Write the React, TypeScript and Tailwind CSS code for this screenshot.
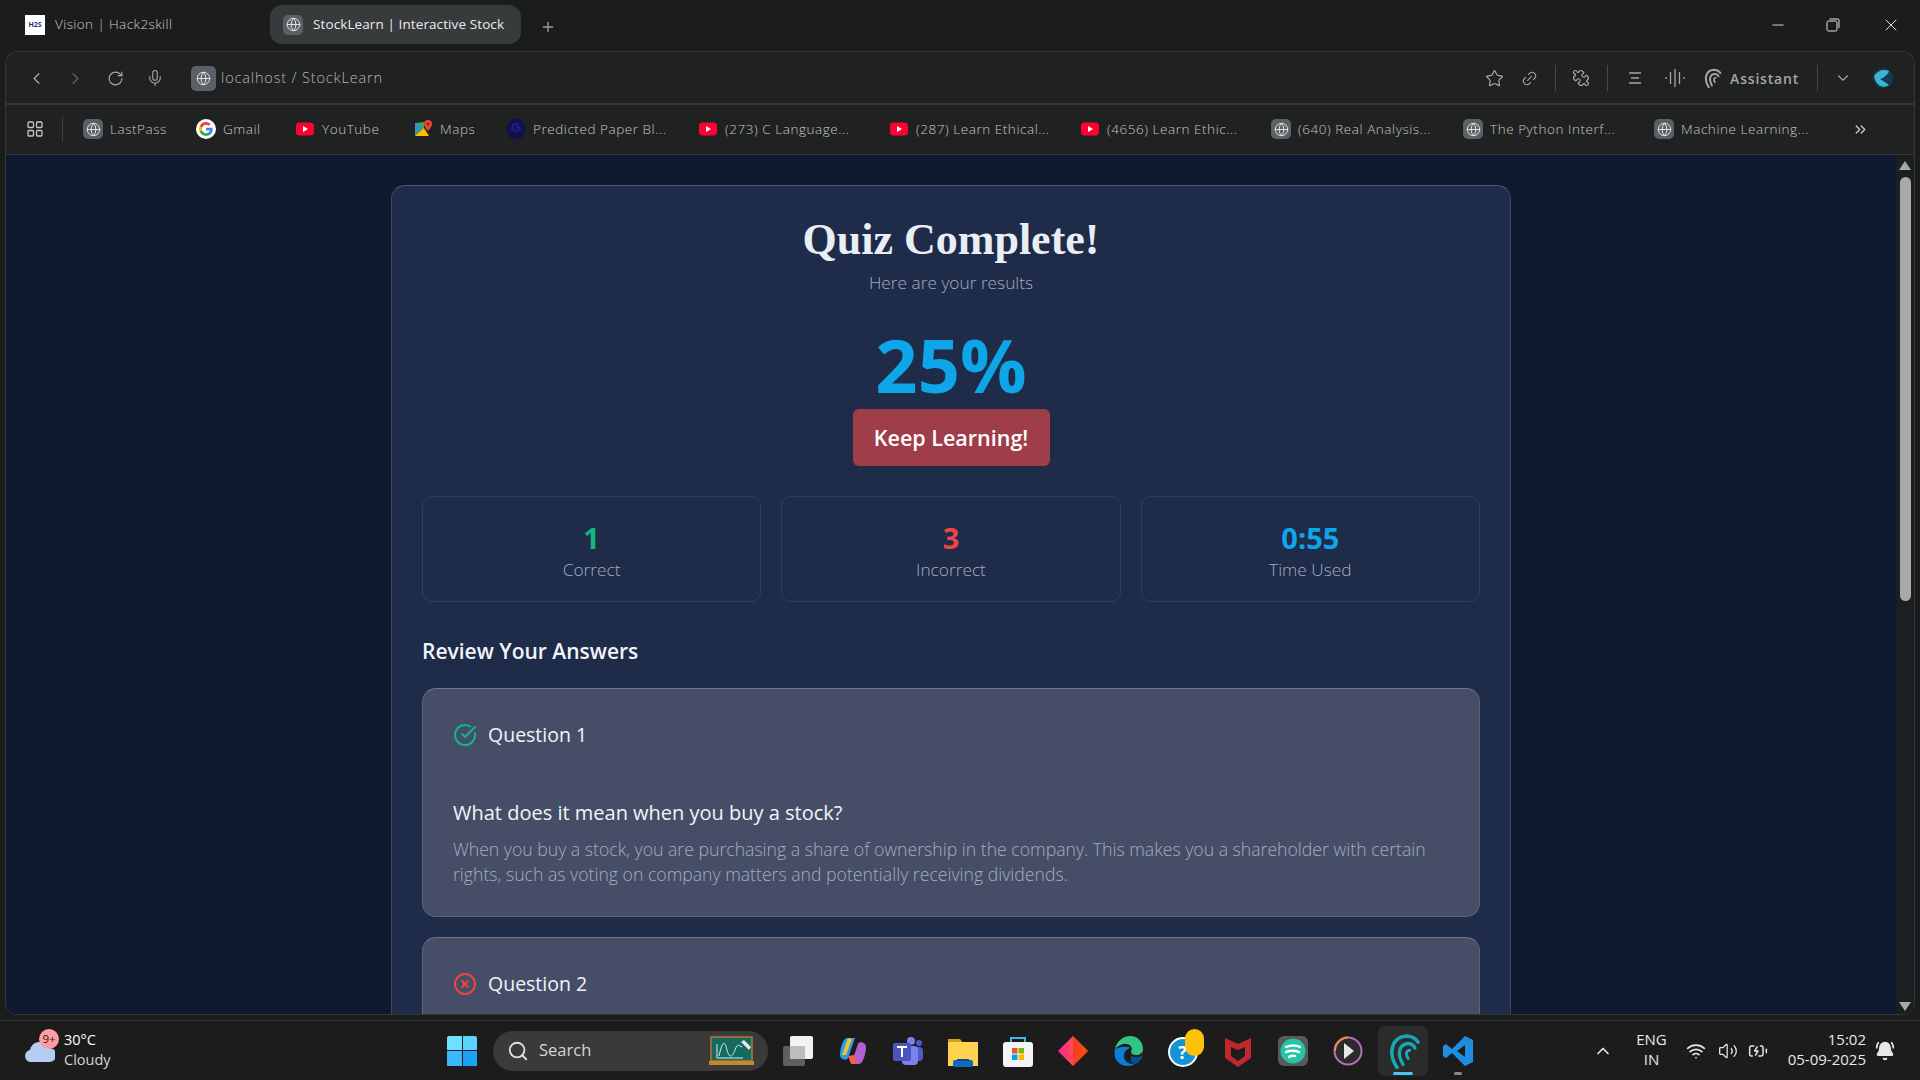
import React from "react";
import { ChevronLeft, ChevronRight, RotateCw, Mic, Globe, Star, Link2, Puzzle, ChevronDown, ChevronsRight, Search, ChevronUp, Wifi, Volume2, BatteryCharging, CircleCheckBig, CircleX, Minus, X, Plus, BellRing } from "lucide-react";

const GlobeIcon = ({ cls }: { cls: string }) => (
  <span className={`flex items-center justify-center rounded-[5px] bg-[#5a6166] shrink-0 ${cls}`}>
    <Globe size={15} color="#e8e8e8" strokeWidth={1.5} />
  </span>
);
const Yt = () => (
  <svg width="20" height="20" viewBox="0 0 20 20" className="shrink-0">
    <rect x="1" y="3.5" width="18" height="13" rx="3.5" fill="#ff0033" />
    <path d="M8 7l5 3-5 3z" fill="#fff" />
  </svg>
);
const G = () => (
  <svg width="20" height="20" viewBox="0 0 48 48" className="shrink-0">
    <circle cx="24" cy="24" r="24" fill="#fff" />
    <path fill="#4285F4" d="M40 24.5c0-1.2-.1-2.3-.3-3.4H24v6.5h9a7.7 7.7 0 0 1-3.3 5v4.2h5.400C38.200 33.800 40 29.600 40 24.500z" />
    <path fill="#34A853" d="M24 40.500c4.500 0 8.200-1.500 11-4l-5.400-4.200c-1.500 1-3.400 1.600-5.600 1.600-4.300 0-8-2.900-9.300-6.900H9.100v4.300A16.500 16.500 0 0 0 24 40.500z" />
    <path fill="#FBBC05" d="M14.700 27a9.900 9.900 0 0 1 0-6.300v-4.300H9.100a16.500 16.500 0 0 0 0 14.900z" />
    <path fill="#EA4335" d="M24 13.900c2.400 0 4.600.8 6.300 2.500l4.800-4.800A16.500 16.500 0 0 0 9.100 16.400l5.600 4.300c1.300-4 5-6.800 9.300-6.800z" />
  </svg>
);
const MapsI = () => (
  <svg width="20" height="20" viewBox="0 0 20 20" className="shrink-0">
    <path d="M2 4l9-1v14H2z" fill="#34a853" />
    <path d="M2 17l9-8 5 8z" fill="#fbbc05" />
    <path d="M2 4l6 5-6 5z" fill="#4285f4" />
    <path d="M15 1a4 4 0 0 0-4 4c0 3 4 7 4 7s4-4 4-7a4 4 0 0 0-4-4z" fill="#ea4335" />
    <circle cx="15" cy="5" r="1.400" fill="#8c1f17" />
  </svg>
);
const Spiral = () => (
  <svg width="20" height="22" viewBox="0 0 20 22" className="shrink-0">
    <ellipse cx="10" cy="11" rx="9.500" ry="10.500" fill="#10104a" />
    <path d="M10 11a2 2 0 1 1 2 1.500 4 4 0 0 1-6-2 4.500 4.500 0 0 1 7-4" fill="none" stroke="#23239a" strokeWidth="1.500" />
  </svg>
);
const GlobeB = () => <GlobeIcon cls="w-5 h-5" />;

const bookmarks: { t: string; i: React.ReactNode; w: string }[] = [
  { t: "LastPass", i: <GlobeB />, w: "w-[113px]" },
  { t: "Gmail", i: <G />, w: "w-[99px]" },
  { t: "YouTube", i: <Yt />, w: "w-[118px]" },
  { t: "Maps", i: <MapsI />, w: "w-[93px]" },
  { t: "Predicted Paper Bl...", i: <Spiral />, w: "w-[192px]" },
  { t: "(273) C Language...", i: <Yt />, w: "w-[191px]" },
  { t: "(287) Learn Ethical...", i: <Yt />, w: "w-[191px]" },
  { t: "(4656) Learn Ethic...", i: <Yt />, w: "w-[191px]" },
  { t: "(640) Real Analysis...", i: <GlobeB />, w: "w-[192px]" },
  { t: "The Python Interf...", i: <GlobeB />, w: "w-[191px]" },
  { t: "Machine Learning...", i: <GlobeB />, w: "w-[186px]" },
];

const Arc = ({ s = 24 }: { s?: number }) => (
  <svg width={s} height={s} viewBox="0 0 24 24" fill="none" strokeLinecap="round" stroke="currentColor">
    <path d="M8 23C2 14 4 3 14 2c3 0 6 1 8 4" strokeWidth="2.400" />
    <path d="M12 21C8 14 9 8 15 7c2 0 4 1 5 3" strokeWidth="2.200" />
    <path d="M15.500 17c-2-3-1.500-5 1-5.500" strokeWidth="2" />
  </svg>
);

const Divider = () => <span className="block w-px h-[26px] bg-[#45484a]" />;

function Stat({ v, l, c }: { v: string; l: string; c: string }) {
  return (
    <div className="h-[106px] rounded-[10px] border border-[#323d58] flex flex-col items-center pt-[21px]">
      <div className={`text-[29px] leading-[40px] font-bold ${c}`}>{v}</div>
      <div className="text-[17.300px] leading-[24px] font-light text-[#a3adbd]">{l}</div>
    </div>
  );
}

const Win = () => (
  <span className="grid grid-cols-2 gap-[1px] w-[30px] h-[30px]">
    <span className="bg-[#6fe0ff] rounded-tl-[2px]" />
    <span className="bg-[#5fd3ff] rounded-tr-[2px]" />
    <span className="bg-[#39b8fb]" />
    <span className="bg-[#1ba1f5]" />
  </span>
);

const BoardIcon = () => (
  <svg width="45" height="30" viewBox="0 0 45 30">
    <rect x="2" y="1" width="41" height="24" fill="#146a5f" stroke="#b5782a" strokeWidth="1.500" />
    <rect x="0" y="25" width="45" height="4" fill="#c9872c" />
    <path d="M8 22V8M8 22h26M10 20c4-18 6-14 8-6s5 8 8 0 4-4 7-3" stroke="#dfeee8" fill="none" strokeWidth="1" />
    <path d="M32 6l8 8 2-3-7-7z" fill="#e8e8e8" />
  </svg>
);

const tbar: React.ReactNode[] = [
  <svg width="32" height="32" viewBox="0 0 32 32" key="tv"><rect x="1" y="11" width="22" height="20" rx="2" fill="#5f5f5f" /><rect x="8" y="1" width="23" height="23" rx="2" fill="#f2f2f2" /><rect x="8" y="11" width="15" height="13" fill="#bdbdbd" /></svg>,
  <svg width="30" height="32" viewBox="0 0 30 32" key="cp"><path d="M9 3h8l-7 20c-1 3-8 2-8-3 0-6 3-17 7-17z" fill="#2b9de8" /><path d="M4 20l6-17 4 1-6 16z" fill="#f2c230" /><path d="M21 29h-8l7-20c1-3 8-2 8 3 0 6-3 17-7 17z" fill="#b45ed3" /><path d="M13 29l-3-8 6-1 3 9z" fill="#f0604a" /></svg>,
  <svg width="32" height="32" viewBox="0 0 32 32" key="tm"><circle cx="19" cy="6" r="4" fill="#7b83eb" /><circle cx="27" cy="8" r="3" fill="#5059c9" /><rect x="21" y="12" width="10" height="14" rx="4" fill="#5059c9" /><rect x="10" y="11" width="16" height="19" rx="4" fill="#7b83eb" /><rect x="1" y="8" width="18" height="18" rx="2" fill="#4b53bc" /><path d="M5 12h10M10 12v10" stroke="#fff" strokeWidth="2" /></svg>,
  <svg width="30" height="32" viewBox="0 0 30 32" key="fe"><path d="M0 4h12l3 4h-15z" fill="#d6a10f" /><rect x="0" y="7" width="30" height="24" fill="#ffd34f" /><rect x="5" y="25" width="20" height="7" rx="2" fill="#0f6cbd" /><rect x="9" y="24" width="12" height="2" fill="#0b4d8a" /></svg>,
  <svg width="30" height="32" viewBox="0 0 30 32" key="st"><path d="M8 8V3h14v5" fill="none" stroke="#3fb6f0" strokeWidth="2" /><rect x="0" y="7" width="30" height="25" rx="3" fill="#f4f4f4" /><rect x="9" y="13" width="5.500" height="5.500" fill="#f25022" /><rect x="15.500" y="13" width="5.500" height="5.500" fill="#7fba00" /><rect x="9" y="19.500" width="5.500" height="5.500" fill="#00a4ef" /><rect x="15.500" y="19.500" width="5.500" height="5.500" fill="#ffb900" /></svg>,
  <svg width="30" height="32" viewBox="0 0 30 32" key="di"><defs><linearGradient id="dg" x1="0" x2="1" y1="0" y2="0"><stop offset="0" stopColor="#ff1fa0" /><stop offset="1" stopColor="#ff7a00" /></linearGradient></defs><path d="M15 1l15 15-15 15L0 16z" fill="url(#dg)" /><path d="M15 1l15 15-15 15z" fill="#ef2b00" opacity=".5" /></svg>,
  <svg width="30" height="32" viewBox="0 0 30 32" key="ed"><path d="M2 14C4 5 11 1 17 1c8 0 13 6 13 13 0 4-3 6-7 6-3 0-5-1-5-3 3-6-3-9-8-8-4 1-6 3-8 5z" fill="#33c481" /><path d="M2 14c-2 8 2 17 13 17 3 0 5-1 7-2-6 1-11-3-11-8 0-4 3-8 7-8-5-3-14 0-16 1z" fill="#0c7cd5" /><path d="M22 29c4-1 7-5 8-9-2 2-8 3-12 1 0 5 0 8 4 8z" fill="#0a4f94" /></svg>,
  <span className="relative w-[36px] h-[32px] ml-[6px]" key="hp"><span className="absolute left-0 bottom-0 w-[30px] h-[30px] rounded-full bg-[#1593d6] border-2 border-white text-white font-bold text-[18px] leading-[26px] text-center">?</span><span className="absolute right-0 top-[-6px] w-[19px] h-[27px] rounded-full bg-[#ffc107]" /></span>,
  <svg width="28" height="32" viewBox="0 0 28 32" key="mc"><path d="M1 3l13 6 13-6v20l-13 9-13-9z" fill="#c0282d" /><path d="M7 12l7 3 7-3v9l-7 5-7-5z" fill="#1c1c1c" /></svg>,
  <svg width="30" height="32" viewBox="0 0 30 32" key="gr"><rect x="0" y="1" width="30" height="30" rx="6" fill="#5a5a5a" /><circle cx="15" cy="16" r="12.500" fill="#22c5a5" /><path d="M8 12c5-2 10-2 14 0M8 17c5-2 10-1 13 0M11 22c3-2 4-1 6-1" stroke="#fff" strokeWidth="2.500" fill="none" strokeLinecap="round" /></svg>,
  <svg width="30" height="32" viewBox="0 0 30 32" key="pl"><circle cx="15" cy="16" r="13.500" fill="#2b2b2b" stroke="#b071b8" strokeWidth="2" /><path d="M2 16A13.500 13.500 0 0 1 15 2.500" fill="none" stroke="#f08c4a" strokeWidth="2" /><path d="M11 8l10 8-10 8z" fill="#e8e8e8" /></svg>,
];

export default function App() {
  return (
    <div className="w-[1920px] h-[1080px] overflow-hidden flex flex-col bg-[#1b1c1c] font-['Open_Sans',sans-serif] text-white">
      {/* Tab strip */}
      <div className="h-[51px] shrink-0 flex items-start pt-[5px] relative">
        <div className="w-[270px] h-[39px] flex items-center pl-[25px] gap-[10px]">
          <span className="w-5 h-5 bg-white flex items-center justify-center text-[7px] font-bold text-[#26307a] leading-none">H2S</span>
          <span className="text-[13.500px] font-light tracking-[0.4px] text-[#c9cbcc]">Vision | Hack2skill</span>
        </div>
        <div className="w-[251px] h-[39px] rounded-xl bg-[#383b3c] flex items-center pl-[13px] gap-[10px] overflow-hidden">
          <GlobeIcon cls="w-5 h-5" />
          <span className="text-[13.500px] tracking-[0.1px] text-[#ececec] whitespace-nowrap">StockLearn | Interactive Stock</span>
        </div>
        <Plus size={16} color="#9a9c9d" className="ml-[19px] mt-[14px]" />
        <div className="ml-auto flex items-center h-[39px] text-[#e4e4e4]">
          <Minus size={18} strokeWidth={1.2} className="mr-[39px]" />
          <svg width="14" height="14" viewBox="0 0 14 14" fill="none" stroke="currentColor" className="mr-[41px]"><rect x="1" y="3" width="10" height="10" rx="1.500" /><path d="M3.500 1H12a1 1 0 0 1 1 1v8" /></svg>
          <X size={20} strokeWidth={1.2} className="mr-[19px]" />
        </div>
      </div>

      {/* Browser frame */}
      <div className="h-[964px] shrink-0 ml-[5px] mr-[5px] rounded-xl border border-[#343637] overflow-hidden flex flex-col bg-[#202222]">
        {/* Toolbar */}
        <div className="h-[50px] shrink-0 flex items-center border-b-2 border-[#343637] text-[#a4a6a7] box-content pt-[1px] -mb-[1px]">
          <ChevronLeft size={19} strokeWidth={1.6} className="ml-[21px]" />
          <ChevronRight size={19} strokeWidth={1.6} className="ml-[20px] text-[#5f6162]" />
          <RotateCw size={17} strokeWidth={1.6} className="ml-[22px]" />
          <Mic size={18} strokeWidth={1.5} className="ml-[22px]" />
          <GlobeIcon cls="w-[25px] h-[25px] ml-[27px]" />
          <span className="ml-[5px] text-[14.500px] font-light tracking-[0.85px] text-[#b4b6b7]">localhost / StockLearn</span>
          <div className="ml-auto flex items-center">
            <Star size={19} strokeWidth={1.5} />
            <Link2 size={17} strokeWidth={1.5} className="ml-[17px] -rotate-45" />
            <span className="ml-[17px]"><Divider /></span>
            <Puzzle size={18} strokeWidth={1.6} className="ml-[16px] -scale-x-100" />
            <span className="ml-[17px]"><Divider /></span>
            <svg width="14" height="12" viewBox="0 0 14 12" stroke="currentColor" strokeWidth="1.500" className="ml-[20px]"><path d="M1 1h12M3 6h8M1 11h12" /></svg>
            <svg width="20" height="18" viewBox="0 0 20 18" stroke="currentColor" strokeWidth="1.300" className="ml-[23px]"><path d="M1 8v2M5.500 3v12M10 0v18M14.500 3v12M19 8v2" /></svg>
            <span className="ml-[17px] flex"><Arc s={20} /></span>
            <span className="ml-[8px] text-[14px] font-semibold tracking-[0.8px]">Assistant</span>
            <span className="ml-[18px]"><Divider /></span>
            <ChevronDown size={18} strokeWidth={1.5} className="ml-[16px]" />
            <svg width="20" height="20" viewBox="0 0 20 20" className="ml-[21px] mr-[21px]"><circle cx="10" cy="10" r="10" fill="#123b52" /><path d="M1 8c4-6 10-7 15-5-1 4-7 8-9 8 3 2 7 4 9 6-6 4-13 1-15-9z" fill="#3cb4d8" /></svg>
          </div>
        </div>
        {/* Bookmarks */}
        <div className="h-[50px] shrink-0 flex items-center border-b border-[#343637] text-[#c4c6c7] relative box-content">
          <svg width="16" height="16" viewBox="0 0 16 16" fill="none" stroke="currentColor" strokeWidth="1.300" className="ml-[21px]"><rect x="1" y="1" width="5.500" height="5.500" rx="1" /><rect x="9.500" y="1" width="5.500" height="5.500" rx="1" /><rect x="1" y="9.500" width="5.500" height="5.500" rx="1" /><rect x="9.500" y="9.500" width="5.500" height="5.500" rx="1" /></svg>
          <span className="ml-[19px] w-px h-[25px] bg-[#3d3f40]" />
          <div className="ml-[20px] flex items-center">
            {bookmarks.map((b) => (
              <div key={b.t} className={`flex items-center gap-[7px] whitespace-nowrap ${b.w}`}>
                {b.i}
                <span className="text-[13.500px] font-light tracking-[0.55px]">{b.t}</span>
              </div>
            ))}
          </div>
          <ChevronsRight size={17} className="ml-[12px]" />
        </div>
        {/* Page */}
        <div className="flex-1 flex min-h-0 bg-[#0f192e]">
          <div className="flex-1 overflow-hidden flex justify-center pt-[30px]">
            <div className="w-[1120px] h-[1200px] shrink-0 rounded-[14px] border border-[#3c4863] border-t-[#4d5974] bg-[#1e2b49] px-[30px] flex flex-col">
              <h1 className="mt-[30px] text-center font-['Liberation_Serif',serif] font-bold text-[44px] leading-[48px] text-[#e9eef5]">Quiz Complete!</h1>
              <p className="mt-[7px] text-center text-[17.300px] leading-[24px] font-light text-[#a3adbd]">Here are your results</p>
              <div className="mt-[30px] text-center text-[74px] leading-[80px] font-bold text-[#0ea5e9]">25%</div>
              <div className="flex justify-center mt-[4px]">
                <div className="w-[197px] h-[57px] rounded-[6px] bg-[#9f3d49] flex items-center justify-center text-[21.500px] font-semibold pt-[2px]">Keep Learning!</div>
              </div>
              <div className="mt-[30px] grid grid-cols-3 gap-[20px]">
                <Stat v="1" l="Correct" c="text-[#10b981]" />
                <Stat v="3" l="Incorrect" c="text-[#ef4444]" />
                <Stat v="0:55" l="Time Used" c="text-[#0ea5e9]" />
              </div>
              <h2 className="mt-[33px] text-[21px] leading-[32px] font-semibold text-[#f1f5f9]">Review Your Answers</h2>
              <div className="mt-[21px] h-[229px] rounded-[14px] border border-[#5d6479] border-t-[#6e7489] bg-[#464d66] px-[30px] pt-[29px]">
                <div className="flex items-center gap-[11px] h-[34px]">
                  <CircleCheckBig size={24} color="#10b981" strokeWidth={2} />
                  <span className="text-[19.500px] text-[#f1f5f9]">Question 1</span>
                </div>
                <div className="mt-[47px] text-[20px] leading-[28px] font-medium text-[#f1f5f9]">What does it mean when you buy a stock?</div>
                <p className="mt-[10px] text-[17.650px] leading-[25px] font-light text-[#a3adbd]">When you buy a stock, you are purchasing a share of ownership in the company. This makes you a shareholder with certain rights, such as voting on company matters and potentially receiving dividends.</p>
              </div>
              <div className="mt-[20px] h-[229px] rounded-[14px] border border-[#5d6479] border-t-[#6e7489] bg-[#464d66] px-[30px] pt-[29px]">
                <div className="flex items-center gap-[11px] h-[34px]">
                  <CircleX size={24} color="#ef4444" strokeWidth={2} />
                  <span className="text-[19.500px] text-[#f1f5f9]">Question 2</span>
                </div>
              </div>
            </div>
          </div>
          {/* Scrollbar */}
          <div className="w-[18px] shrink-0 bg-[#1c1f22] flex flex-col items-center text-[#a8a8a8] pt-[6px] pb-[3px]">
            <svg width="12" height="9" viewBox="0 0 12 9" fill="currentColor"><path d="M6 0l6 9H0z" /></svg>
            <div className="w-[11px] h-[424px] rounded-full bg-[#a8a8a8] mt-[7px]" />
            <svg width="12" height="9" viewBox="0 0 12 9" fill="currentColor" className="mt-auto"><path d="M6 9L0 0h12z" /></svg>
          </div>
        </div>
      </div>

      {/* Taskbar */}
      <div className="mt-[5px] flex-1 border-t border-[#2f3030] bg-[#1c1c1c] relative flex items-center text-[#e8e8e8]">
        <div className="ml-[25px] relative w-[39px] h-[40px]">
          <svg width="30" height="20" viewBox="0 0 30 20" className="absolute left-0 top-[11px]"><path d="M6 20a6 6 0 0 1-1-11.900A10 10 0 0 1 24 6a7 7 0 0 1 1 14z" fill="#b5cdf5" /></svg>
          <span className="absolute left-[14px] top-[-2px] w-[20px] h-[20px] rounded-full bg-[#ff9ca3] text-[#1c1c1c] text-[11.500px] leading-[20px] text-center">9+</span>
        </div>
        <div className="text-[14.500px] leading-[20px] w-[48px] -mt-[2px]">
          <div className="font-medium text-white">30°C</div>
          <div className="text-[#d5d5d5]">Cloudy</div>
        </div>
        <div className="ml-[335px]"><Win /></div>
        <div className="ml-[16px] w-[275px] h-[40px] rounded-full bg-[#3a3a3a] flex items-center pl-[14px] pr-[14px]">
          <Search size={22} strokeWidth={2} color="#e0e0e0" />
          <span className="ml-[10px] text-[16.500px] text-[#d5d5d5]">Search</span>
          <span className="ml-auto flex"><BoardIcon /></span>
        </div>
        <div className="ml-[2px] flex items-center">
          {tbar.map((n, i) => (
            <div key={i} className="w-[55px] flex justify-center">{n}</div>
          ))}
          <div className="w-[55px] flex justify-center">
            <div className="relative w-[50px] h-[50px] rounded-md bg-[#2a2b2b] flex items-center justify-center text-[#1aa6b4]">
              <Arc s={36} />
              <span className="absolute bottom-[1px] left-[15px] w-[20px] h-[3px] rounded-full bg-[#4cc2ff]" />
            </div>
          </div>
          <div className="relative w-[55px] h-[50px] flex items-center justify-center">
            <svg width="32" height="32" viewBox="0 0 32 32"><path d="M23 1l8 4v22l-8 4-13-13-6 5-3-2v-10l3-2 6 5zM23 10l-8 6 8 6z" fill="#1f8ee0" /></svg>
            <span className="absolute bottom-[1px] left-[24px] w-[8px] h-[3px] rounded-full bg-[#8a8a8a]" />
          </div>
        </div>
        <div className="ml-auto flex items-center mr-[25px]">
          <ChevronUp size={20} strokeWidth={2} />
          <div className="ml-[23px] text-[15px] leading-[20px] text-center -mt-[3px]">ENG<br />IN</div>
          <Wifi size={20} strokeWidth={2} className="ml-[19px]" />
          <Volume2 size={20} strokeWidth={1.500} className="ml-[12px]" />
          <BatteryCharging size={20} strokeWidth={1.800} className="ml-[10px]" />
          <div className="ml-[20px] text-[15px] leading-[20px] text-right -mt-[3px]">15:02<br />05-09-2025</div>
          <BellRing size={20} strokeWidth={2} fill="#e8e8e8" className="ml-[9px]" />
        </div>
      </div>
    </div>
  );
}
